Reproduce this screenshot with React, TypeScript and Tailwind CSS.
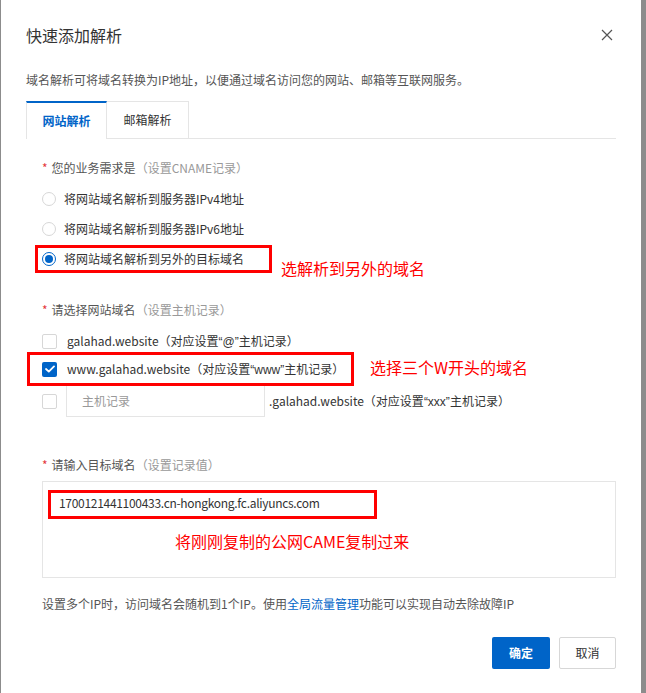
import React from "react";

const font = { fontFamily: '"Noto Sans CJK SC", "Noto Sans", sans-serif' };

function Q({ children }: { children: React.ReactNode }) {
  return <span style={{ fontFamily: '"Liberation Sans", sans-serif' }}>{children}</span>;
}

function Radio({ checked }: { checked?: boolean }) {
  return checked ? (
    <span className="w-[14px] h-[14px] rounded-full border border-[#0064c8] flex items-center justify-center bg-white shrink-0">
      <span className="w-[8px] h-[8px] rounded-full bg-[#0064c8]" />
    </span>
  ) : (
    <span className="w-[14px] h-[14px] rounded-full border border-[#d7d7d7] bg-white shrink-0" />
  );
}

function Checkbox({ checked }: { checked?: boolean }) {
  return checked ? (
    <span className="w-[15px] h-[15px] rounded-[2px] bg-[#0064c8] flex items-center justify-center shrink-0">
      <svg width="10" height="8" viewBox="0 0 10 8" fill="none">
        <path d="M1 4 L3.8 6.6 L9 1.4" stroke="white" strokeWidth="1.8" strokeLinecap="round" strokeLinejoin="round" />
      </svg>
    </span>
  ) : (
    <span className="w-[15px] h-[15px] rounded-[2px] border border-[#d7d7d7] bg-white shrink-0" />
  );
}

function Label({ text, hint }: { text: string; hint: string }) {
  return (
    <div className="h-[18px] leading-[18px] text-[12px] text-[#555] flex items-center">
      <span className="text-[#e4393c] mr-[4px]">*</span>
      <span>{text}</span>
      <span className="text-[#999]">（{hint}）</span>
    </div>
  );
}

export default function App() {
  return (
    <div className="w-[646px] h-[693px] bg-[#8c8c8c] flex overflow-hidden" style={font}>
      <div className="ml-[1px] w-[640px] h-full bg-white px-[25px] flex flex-col">
        {/* header */}
        <div className="pt-[23px] h-[47px] flex items-center justify-between">
          <div className="text-[16px] leading-[24px] text-[#333]">快速添加解析</div>
          <svg width="12" height="12" viewBox="0 0 12 12" className="mr-[3px]">
            <path d="M1 1 L11 11 M11 1 L1 11" stroke="#555" strokeWidth="1.2" />
          </svg>
        </div>
        <div className="mt-[24px] text-[12px] leading-[18px] text-[#555]">
          域名解析可将域名转换为IP地址，以便通过域名访问您的网站、邮箱等互联网服务。
        </div>
        {/* tabs */}
        <div className="mt-[12px] flex h-[38px]">
          <div className="w-[81px] h-[38px] border-t-2 border-t-[#0064c8] border-l border-r border-[#e5e5e5] flex items-center justify-center text-[12px] font-bold text-[#0064c8]">
            网站解析
          </div>
          <div className="w-[82px] h-[38px] border-t border-r border-b border-[#e5e5e5] flex items-center justify-center text-[12px] text-[#333]">
            邮箱解析
          </div>
          <div className="flex-1 h-[38px] border-b border-[#e5e5e5]" />
        </div>

        {/* form */}
        <div className="pl-[16px] flex flex-col">
          <div className="mt-[20px]">
            <Label text="您的业务需求是" hint="设置CNAME记录" />
          </div>
          <div className="mt-[7px] flex flex-col">
            <div className="h-[30px] flex items-center gap-[8px] text-[12px] text-[#333]">
              <Radio />
              <span>将网站域名解析到服务器IPv4地址</span>
            </div>
            <div className="h-[30px] flex items-center gap-[8px] text-[12px] text-[#333]">
              <Radio />
              <span>将网站域名解析到服务器IPv6地址</span>
            </div>
            <div className="relative h-[30px] flex items-center gap-[8px] text-[12px] text-[#333]">
              <Radio checked />
              <span>将网站域名解析到另外的目标域名</span>
              <div className="absolute left-[-7px] top-[1px] w-[237px] h-[28px] border-[3px] border-[#ff0000]" />
              <div className="absolute left-[239px] top-[13px] text-[16px] leading-[22px] text-[#ff0000] whitespace-nowrap">
                选解析到另外的域名
              </div>
            </div>
          </div>

          <div className="mt-[27px]">
            <Label text="请选择网站域名" hint="设置主机记录" />
          </div>
          <div className="mt-[8px] flex flex-col">
            <div className="h-[28px] flex items-center gap-[10px] text-[12px] text-[#333]">
              <Checkbox />
              <span>galahad.website（对应设置<Q>“@”</Q>主机记录）</span>
            </div>
            <div className="relative h-[28px] flex items-center gap-[10px] text-[12px] text-[#333]">
              <Checkbox checked />
              <span>www.galahad.website（对应设置<Q>“www”</Q>主机记录）</span>
              <div className="absolute left-[-15px] top-[-3px] w-[327px] h-[34px] border-[3px] border-[#ff0000]" />
              <div className="absolute left-[328px] top-[1px] text-[16px] leading-[22px] text-[#ff0000] whitespace-nowrap">
                选择三个W开头的域名
              </div>
            </div>
            <div className="mt-[2px] h-[32px] flex items-center gap-[9px] text-[12px] text-[#333]">
              <Checkbox />
              <div className="w-[199px] h-[32px] border border-[#e5e5e5] flex items-center pl-[15px] text-[#999]">
                主机记录
              </div>
              <span className="-ml-[5px]">.galahad.website（对应设置<Q>“xxx”</Q>主机记录）</span>
            </div>
          </div>

          <div className="mt-[39px]">
            <Label text="请输入目标域名" hint="设置记录值" />
          </div>
          <div className="relative mt-[7px] h-[97px] border border-[#e5e5e5] pt-[12px] pl-[16px] text-[12px] leading-[18px] text-[#333]">
            <span className="tracking-[-0.3px]">1700121441100433.cn-hongkong.fc.aliyuncs.com</span>
            <div className="absolute left-[5px] top-[8px] w-[329px] h-[29px] border-[3px] border-[#ff0000]" />
            <div className="absolute left-[132px] top-[48px] text-[16px] leading-[22px] text-[#ff0000] whitespace-nowrap">
              将刚刚复制的公网CAME复制过来
            </div>
          </div>

          <div className="mt-[17px] text-[12px] leading-[18px] text-[#555]">
            设置多个IP时，访问域名会随机到1个IP。使用<span className="text-[#0064c8]">全局流量管理</span>功能可以实现自动去除故障IP
          </div>
        </div>

        <div className="mt-[24px] flex justify-end gap-[9px]">
          <button className="w-[58px] h-[32px] bg-[#0064c8] text-white text-[12px] font-bold rounded-[2px]">确定</button>
          <button className="w-[57px] h-[32px] bg-white border border-[#d7d7d7] text-[#333] text-[12px] rounded-[2px]">取消</button>
        </div>
      </div>
    </div>
  );
}
